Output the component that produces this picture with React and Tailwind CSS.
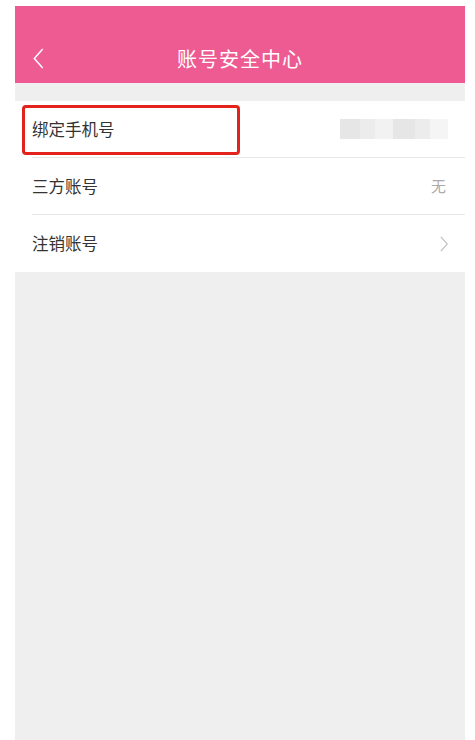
import React from "react";

const font = { fontFamily: '"Noto Sans CJK SC", "Noto Sans", sans-serif' };

function Chevron({ className }) {
  return (
    <svg className={className} viewBox="0 0 10 20" fill="none">
      <polyline points="9,1 1,10 9,19" stroke="currentColor" strokeWidth="1.4" strokeLinejoin="miter" />
    </svg>
  );
}

function Row({ label, children, last }) {
  return (
    <div className="pl-[17px] bg-white">
      <div className={"h-[57px] flex items-center justify-between pr-[19px] " + (last ? "" : "border-b border-[#e8e8e8]")}>
        <span className="text-[16.5px] text-[#333]">{label}</span>
        {children}
      </div>
    </div>
  );
}

export default function App() {
  return (
    <div className="w-full min-h-[740px] bg-white pt-[6px] pl-[15px] pr-[10px]" style={font}>
      <div className="h-[734px] bg-[#efefef] flex flex-col">
        <div className="h-[77px] bg-[#ed5b92] pt-[28px] shrink-0">
          <div className="h-[49px] grid grid-cols-[60px_1fr_60px] items-center">
            <div className="pl-[18px] text-white">
              <Chevron className="w-[11px] h-[21px]" />
            </div>
            <div className="text-center text-white text-[20px] tracking-[1px]">账号安全中心</div>
            <div />
          </div>
        </div>

        <div className="h-[18px] shrink-0" />

        <div className="relative">
          <Row label="绑定手机号">
            <div className="flex items-center h-[20px] mr-[-2px]">
              <div className="w-[20px] h-full bg-[#e6e6e6]" />
              <div className="w-[15px] h-full bg-[#ececec]" />
              <div className="w-[18px] h-full bg-[#f2f2f2]" />
              <div className="w-[22px] h-full bg-[#e6e6e6]" />
              <div className="w-[15px] h-full bg-[#ececec]" />
              <div className="w-[18px] h-full bg-[#f5f5f5]" />
            </div>
          </Row>
          <Row label="三方账号">
            <span className="text-[15px] text-[#aaa]">无</span>
          </Row>
          <Row label="注销账号" last>
            <Chevron className="w-[8px] h-[16px] text-[#bbb] rotate-180 mr-[-2px]" />
          </Row>

          <div className="absolute left-[7px] top-[4px] w-[218px] h-[50px] border-[3px] border-[#e3221b] rounded-[4px]" />
        </div>
      </div>
    </div>
  );
}
